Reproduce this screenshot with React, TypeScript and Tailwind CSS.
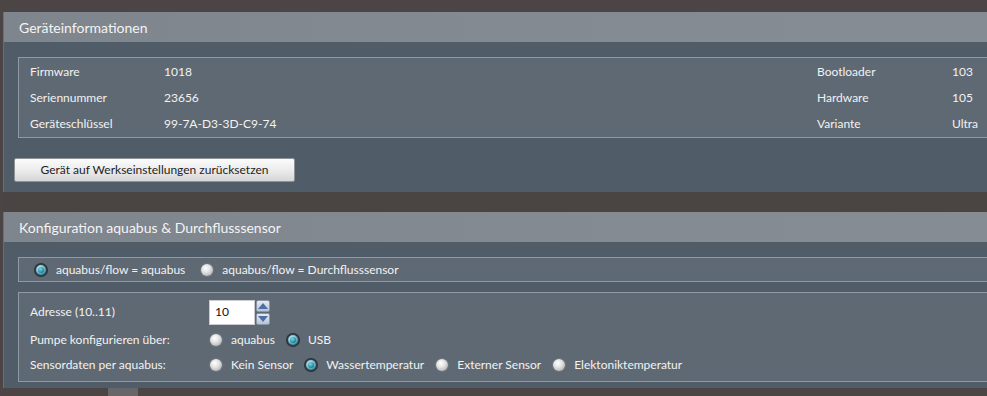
import type { ReactNode } from "react";

const font = { fontFamily: 'Lato, "Noto Sans", Arial, sans-serif' };

function Radio({ checked }: { checked?: boolean }) {
  return checked ? (
    <span className="inline-flex h-[12px] w-[12px] shrink-0 items-center justify-center rounded-full bg-[#3a4148] ring-1 ring-[#2a3036]">
      <span className="h-[10px] w-[10px] rounded-full bg-[radial-gradient(circle_at_40%_35%,#d9f3f7_0%,#8fd0dc_35%,#2d8ea3_75%)] p-[2px]">
        <span className="block h-full w-full rounded-full bg-[radial-gradient(circle_at_40%_35%,#7fd6e6_0%,#1f7f96_70%,#0f5366_100%)]" />
      </span>
    </span>
  ) : (
    <span className="inline-block h-[12px] w-[12px] shrink-0 rounded-full bg-[radial-gradient(circle_at_40%_35%,#ffffff_0%,#e2e2e2_40%,#9c9c9c_100%)] shadow-[0_0_0_1px_#6f7780]" />
  );
}

function Option({ checked, children }: { checked?: boolean; children: ReactNode }) {
  return (
    <span className="inline-flex items-center gap-[9px]">
      <Radio checked={checked} />
      <span>{children}</span>
    </span>
  );
}

function Panel({ title, children, className }: { title: string; children: ReactNode; className?: string }) {
  return (
    <section className={`border-l border-[#66707a] bg-[#505c68] ${className ?? ""}`}>
      <div className="flex h-[30px] items-center bg-[linear-gradient(90deg,#7e858d_0%,#838a92_50%,#858c94_100%)] pl-[15px] text-[14px] text-[#f4f4f4]">
        {title}
      </div>
      {children}
    </section>
  );
}

const info = [
  ["Firmware", "1018", "Bootloader", "103"],
  ["Seriennummer", "23656", "Hardware", "105"],
  ["Geräteschlüssel", "99-7A-D3-3D-C9-74", "Variante", "Ultra"],
];

export default function App() {
  return (
    <div className="relative h-[396px] w-[987px] overflow-hidden bg-[#4b4645] text-[12px] text-[#f2f2f2]" style={font}>
      <div className="pl-[3px] pt-[12px]">
        <Panel title="Geräteinformationen" className="h-[180px] w-[1000px]">
          <div className="pl-[14px] pt-[15px]">
            <div className="border border-r-0 border-[#8e99a3] bg-[#5f6973] pt-[1px] pl-[11px]">
              {info.map(([a, b, c, d]) => (
                <div key={a} className="flex h-[26px] items-center">
                  <span className="w-[134px]">{a}</span>
                  <span className="w-[653px]">{b}</span>
                  <span className="w-[135px]">{c}</span>
                  <span>{d}</span>
                </div>
              ))}
            </div>
            <button className="ml-[-4px] mt-[20px] h-[24px] w-[281px] rounded-[2px] border border-[#8f9398] bg-[linear-gradient(180deg,#fbfbfb_0%,#ececec_50%,#d6d6d6_100%)] text-[12px] text-[#1e1e1e]">
              Gerät auf Werkseinstellungen zurücksetzen
            </button>
          </div>
        </Panel>

        <div className="h-[20px] bg-[#4a4543]" />

        <Panel title="Konfiguration aquabus & Durchflusssensor" className="h-[176px] w-[1000px]">
          <div className="pl-[14px] pt-[15px]">
            <div className="flex h-[25px] items-center gap-[16px] border border-r-0 border-[#8e99a3] bg-[#5f6973] pl-[16px]">
              <Option checked>aquabus/flow = aquabus</Option>
              <Option>aquabus/flow = Durchflusssensor</Option>
            </div>
            <div className="mt-[10px] border border-r-0 border-[#8e99a3] bg-[#5f6973] pb-[4px] pl-[11px] pt-[6px]">
              <div className="flex h-[26px] items-center">
                <span className="w-[179px]">Adresse (10..11)</span>
                <span className="flex h-[25px] w-[46px] items-center border border-[#c9cdd1] bg-white pl-[5px] text-[#111]">
                  10
                </span>
                <span className="ml-[1px] flex flex-col gap-[1px]">
                  <span className="flex h-[12px] w-[14px] items-center justify-center rounded-[2px] border border-[#8a97aa] bg-[linear-gradient(180deg,#e7ebf3,#b9c3d4)]">
                    <svg width="10" height="6" viewBox="0 0 10 6"><path d="M0 6 L5 0 L10 6 Z" fill="#4d6fa6" /></svg>
                  </span>
                  <span className="flex h-[12px] w-[14px] items-center justify-center rounded-[2px] border border-[#8a97aa] bg-[linear-gradient(180deg,#e7ebf3,#b9c3d4)]">
                    <svg width="10" height="6" viewBox="0 0 10 6"><path d="M0 0 L5 6 L10 0 Z" fill="#4d6fa6" /></svg>
                  </span>
                </span>
              </div>
              <div className="mt-[2px] flex h-[26px] items-center">
                <span className="w-[180px]">Pumpe konfigurieren über:</span>
                <span className="flex items-center gap-[12px]">
                  <Option>aquabus</Option>
                  <Option checked>USB</Option>
                </span>
              </div>
              <div className="flex h-[24px] items-center">
                <span className="w-[180px]">Sensordaten per aquabus:</span>
                <span className="flex items-center gap-[12px]">
                  <Option>Kein Sensor</Option>
                  <Option checked>Wassertemperatur</Option>
                  <Option>Externer Sensor</Option>
                  <Option>Elektoniktemperatur</Option>
                </span>
              </div>
            </div>
          </div>
        </Panel>
      </div>
      <div className="absolute bottom-0 left-[108px] h-[8px] w-[30px] bg-[#67676a]" />
    </div>
  );
}
